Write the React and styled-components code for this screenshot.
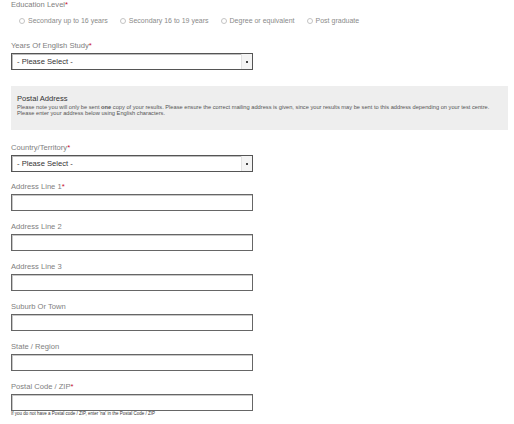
import React from 'react';
import styled, { createGlobalStyle } from 'styled-components';

const GlobalStyle = createGlobalStyle`
  html, body {
    margin: 0;
    padding: 0;
    background: #fff;
    font-family: "Liberation Sans", Arial, Helvetica, sans-serif;
  }
`;

const Page = styled.div`
  width: 514px;
  height: 424px;
  padding: 0 6px 0 11px;
  box-sizing: border-box;
  overflow: hidden;
`;

const Field = styled.div`
  margin-bottom: ${(p) => p.$gap ?? 11}px;
`;

const Label = styled.div`
  font-size: 7.6px;
  line-height: 10px;
  height: 10px;
  color: #808080;
  margin-bottom: ${(p) => p.$gap ?? 2}px;
`;

const Req = styled.span`
  color: #c8102e;
`;

const RadioRow = styled.div`
  display: flex;
  align-items: center;
  height: 10px;
  padding-left: 8px;
  gap: 12px;
`;

const RadioItem = styled.label`
  display: flex;
  align-items: center;
  gap: 3px;
  font-size: 7px;
  line-height: 10px;
  color: #8a8a8a;
`;

const Circle = styled.span`
  width: 4px;
  height: 4px;
  border-radius: 50%;
  border: 0.6px solid #c4c4c4;
  background: #fff;
`;

const SelectBox = styled.div`
  width: 242px;
  height: 17px;
  box-sizing: border-box;
  border: 1px solid #555;
  box-shadow: inset 1px 1px 0 #bdbdbd;
  display: flex;
  align-items: center;
  justify-content: space-between;
  background: #fff;
`;

const SelectText = styled.span`
  font-size: 7.6px;
  color: #333;
  padding-left: 5px;
`;

const Arrow = styled.span`
  width: 10px;
  height: 100%;
  border-left: 1px solid #e2e2e2;
  background: #f4f4f4;
  display: flex;
  align-items: center;
  justify-content: center;

  &::after {
    content: '';
    width: 2px;
    height: 2px;
    background: #444;
  }
`;

const Input = styled.div`
  width: 242px;
  height: 17px;
  box-sizing: border-box;
  border: 1px solid #666;
  box-shadow: inset 1px 1px 0 #c8c8c8;
  background: #fff;
`;

const Panel = styled.section`
  width: 497px;
  height: 44px;
  box-sizing: border-box;
  background: #eeeeee;
  padding: 8px 6px 0;
  margin-bottom: 13px;
`;

const PanelTitle = styled.div`
  font-size: 7.6px;
  line-height: 10px;
  color: #333;
  margin-bottom: 1px;
`;

const PanelText = styled.p`
  margin: 0;
  font-size: 5.7px;
  line-height: 5.8px;
  color: #555;
`;

const Help = styled.div`
  font-size: 4.5px;
  line-height: 6px;
  color: #333;
`;

const levels = [
  'Secondary up to 16 years',
  'Secondary 16 to 19 years',
  'Degree or equivalent',
  'Post graduate',
];

const addressFields = [
  { label: 'Address Line 1', required: true },
  { label: 'Address Line 2' },
  { label: 'Address Line 3' },
  { label: 'Suburb Or Town' },
  { label: 'State / Region' },
];

export default function App() {
  return (
    <Page>
      <GlobalStyle />
      <Field $gap={15}>
        <Label $gap={6}>
          Education Level<Req>*</Req>
        </Label>
        <RadioRow>
          {levels.map((l) => (
            <RadioItem key={l}>
              <Circle />
              {l}
            </RadioItem>
          ))}
        </RadioRow>
      </Field>

      <Field $gap={16}>
        <Label>
          Years Of English Study<Req>*</Req>
        </Label>
        <SelectBox>
          <SelectText>- Please Select -</SelectText>
          <Arrow />
        </SelectBox>
      </Field>

      <Panel>
        <PanelTitle>Postal Address</PanelTitle>
        <PanelText>
          Please note you will only be sent <b>one</b> copy of your results. Please ensure the correct
          mailing address is given, since your results may be sent to this address depending on your
          test centre.
          <br />
          Please enter your address below using English characters.
        </PanelText>
      </Panel>

      <Field $gap={10}>
        <Label>
          Country/Territory<Req>*</Req>
        </Label>
        <SelectBox>
          <SelectText>- Please Select -</SelectText>
          <Arrow />
        </SelectBox>
      </Field>

      {addressFields.map((f) => (
        <Field key={f.label}>
          <Label>
            {f.label}
            {f.required && <Req>*</Req>}
          </Label>
          <Input />
        </Field>
      ))}

      <Field $gap={0}>
        <Label>
          Postal Code / ZIP<Req>*</Req>
        </Label>
        <Input />
        <Help>If you do not have a Postal code / ZIP, enter 'na' in the Postal Code / ZIP</Help>
      </Field>
    </Page>
  );
}
